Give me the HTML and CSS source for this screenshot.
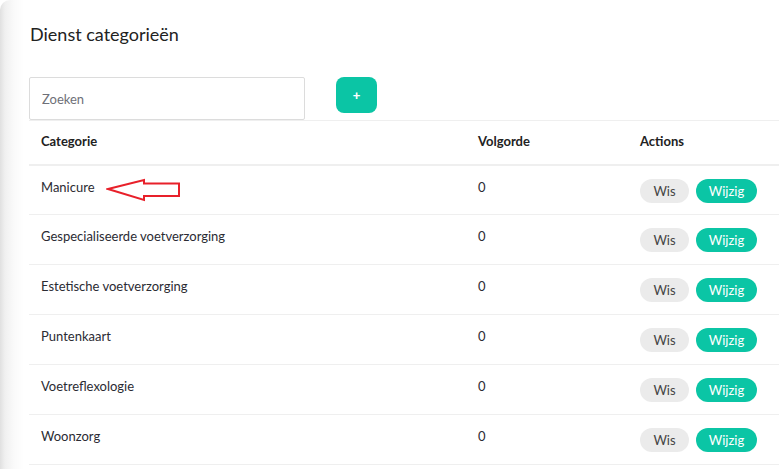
FILE: index.html
```html
<!DOCTYPE html>
<html lang="nl">
<head>
    <meta charset="UTF-8">
    <meta name="viewport" content="width=device-width, initial-scale=1.0">
    <title>Dienst categorieën</title>
    <link rel="stylesheet" href="styles.css">
</head>
<body>
    <div class="page">
        <h1 class="page-title">Dienst categorieën</h1>

        <div class="toolbar">
            <input type="text" class="search" placeholder="Zoeken">
            <button type="button" class="btn-add">+</button>
        </div>

        <table class="cat-table">
            <thead>
                <tr>
                    <th class="col-name">Categorie</th>
                    <th class="col-order">Volgorde</th>
                    <th class="col-actions">Actions</th>
                </tr>
            </thead>
            <tbody>
                <tr>
                    <td>
                        <span class="name-wrap">Manicure<svg class="arrow" width="76" height="24" viewBox="0 0 76 24">
                                <path d="M2 11 L38 2 L38 5.5 L73 5.5 L73 18 L38 18 L38 22 Z" fill="#fff" stroke="#e8202a" stroke-width="2" stroke-linejoin="miter"/>
                            </svg></span>
                    </td>
                    <td>0</td>
                    <td><button class="btn-wis">Wis</button><button class="btn-edit">Wijzig</button></td>
                </tr>
                <tr>
                    <td>Gespecialiseerde voetverzorging</td>
                    <td>0</td>
                    <td><button class="btn-wis">Wis</button><button class="btn-edit">Wijzig</button></td>
                </tr>
                <tr>
                    <td>Estetische voetverzorging</td>
                    <td>0</td>
                    <td><button class="btn-wis">Wis</button><button class="btn-edit">Wijzig</button></td>
                </tr>
                <tr>
                    <td>Puntenkaart</td>
                    <td>0</td>
                    <td><button class="btn-wis">Wis</button><button class="btn-edit">Wijzig</button></td>
                </tr>
                <tr>
                    <td>Voetreflexologie</td>
                    <td>0</td>
                    <td><button class="btn-wis">Wis</button><button class="btn-edit">Wijzig</button></td>
                </tr>
                <tr>
                    <td>Woonzorg</td>
                    <td>0</td>
                    <td><button class="btn-wis">Wis</button><button class="btn-edit">Wijzig</button></td>
                </tr>
            </tbody>
        </table>
    </div>
</body>
</html>
```

FILE: styles.css
```css
body {
    margin: 0;
    padding: 0;
    background: #fff;
    font-family: Lato, "Noto Sans", sans-serif;
    color: #2b2b33;
    overflow: hidden;
}

.page {
    min-height: 469px;
    padding: 22px 0 0 29px;
    border-top-left-radius: 10px;
    background: linear-gradient(to right, #e0e0e0 0, #f0f0f0 5px, #fafafa 14px, #fff 24px);
    box-sizing: border-box;
}

.page-title {
    margin: 0 0 31px 1px;
    font-size: 18px;
    font-weight: 400;
    line-height: 24px;
    color: #222;
}

.toolbar {
    display: flex;
    align-items: flex-start;
    gap: 31px;
}

.search {
    width: 276px;
    height: 43px;
    box-sizing: border-box;
    padding: 0 12px;
    border: 1px solid #dcdcdc;
    border-radius: 2px;
    font-family: inherit;
    font-size: 13px;
    outline: none;
}

.search::placeholder {
    color: #6e7078;
}

.btn-add {
    width: 41px;
    height: 36px;
    border: none;
    border-radius: 8px;
    background: #0bc5a5;
    color: #fff;
    font-size: 13px;
    font-weight: 700;
    cursor: pointer;
}

.cat-table {
    width: 820px;
    table-layout: fixed;
    border-collapse: collapse;
    font-size: 13px;
}

.cat-table th,
.cat-table td {
    text-align: left;
    vertical-align: top;
    padding: 0 12px;
    box-sizing: border-box;
}

.cat-table th {
    height: 44px;
    padding-bottom: 2px;
    vertical-align: middle;
    font-weight: 700;
    border-top: 1px solid #efefef;
    border-bottom: 2px solid #efefef;
    color: #222;
}

.cat-table td {
    height: 50px;
    padding-top: 11px;
    border-bottom: 1px solid #efefef;
    line-height: 20px;
}

.col-name {
    width: 437px;
}

.col-order {
    width: 162px;
}

.name-wrap {
    position: relative;
}

.arrow {
    position: absolute;
    left: calc(100% + 11px);
    top: -1px;
}

.btn-wis,
.btn-edit {
    height: 24px;
    margin-top: 2px;
    border: none;
    border-radius: 12px;
    font-family: inherit;
    font-size: 13px;
    cursor: pointer;
}

.btn-wis {
    width: 49px;
    background: #ebebeb;
    color: #444;
    margin-right: 7px;
}

.btn-edit {
    width: 61px;
    background: #0bc5a5;
    color: #fff;
}
```
